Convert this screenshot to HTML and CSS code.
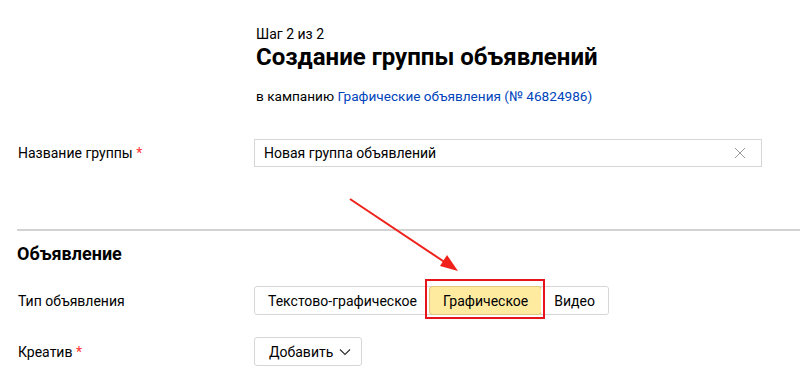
FILE: index.html
```html
<!DOCTYPE html>
<html lang="ru">
<head>
    <meta charset="UTF-8">
    <meta name="viewport" content="width=device-width, initial-scale=1.0">
    <title>Создание группы объявлений</title>
    <link rel="stylesheet" href="styles.css">
</head>
<body>
    <div class="page">
        <div class="head">
            <div class="step">Шаг 2 из 2</div>
            <h1>Создание группы объявлений</h1>
            <div class="campaign">в кампанию <a href="#">Графические объявления (№ 46824986)</a></div>
        </div>

        <div class="row row-name">
            <div class="label">Название группы <span class="req">*</span></div>
            <div class="input">
                <span class="input-text">Новая группа объявлений</span>
                <svg class="clear" width="12" height="12" viewBox="0 0 12 12">
                    <path d="M1 1 L11 11 M11 1 L1 11" stroke="#999" stroke-width="1" fill="none"/>
                </svg>
            </div>
        </div>

        <div class="section">
            <h2>Объявление</h2>

            <div class="row row-type">
                <div class="label">Тип объявления</div>
                <div class="control">
                    <div class="seg">
                        <button type="button">Текстово-графическое</button>
                        <button type="button" class="active">Графическое</button>
                        <button type="button">Видео</button>
                    </div>
                </div>
            </div>

            <div class="row row-creative">
                <div class="label">Креатив <span class="req">*</span></div>
                <div class="control">
                    <button type="button" class="add">Добавить
                        <svg width="12" height="8" viewBox="0 0 12 8">
                            <path d="M1 1.5 L6 6.5 L11 1.5" stroke="#333" stroke-width="1.2" fill="none"/>
                        </svg>
                    </button>
                </div>
            </div>
        </div>
    </div>

    <!-- annotation drawn over the screenshot -->
    <div class="mark"></div>
    <svg class="arrow" width="800" height="388" viewBox="0 0 800 388">
        <line x1="350" y1="199" x2="446" y2="263" stroke="#f0201a" stroke-width="2"/>
        <polygon points="458,271 440,266 447,255" fill="#f0201a"/>
    </svg>
</body>
</html>
```

FILE: styles.css
```css
/* General Reset */
* {
    margin: 0;
    padding: 0;
    box-sizing: border-box;
}

body {
    font-family: 'Roboto', 'Liberation Sans', sans-serif;
    font-size: 15px;
    color: #000;
    background: #fff;
    overflow: hidden;
}

.page {
    padding: 26px 0 0 17px;
}

.head {
    padding-left: 239px;
}

.step {
    font-size: 14px;
    line-height: 16px;
}

.head h1 {
    font-size: 24px;
    font-weight: 700;
    line-height: 28px;
    margin-top: 1px;
}

.campaign {
    font-size: 13.6px;
    line-height: 16px;
    margin-top: 17px;
}

.campaign a {
    color: #0044bb;
    text-decoration: none;
}

.row {
    display: grid;
    grid-template-columns: 237px 508px;
    align-items: center;
}

.label {
    font-size: 14px;
    padding-left: 1px;
}

.req {
    color: #f33;
}

.row-name {
    margin-top: 35px;
}

.input {
    height: 28px;
    border: 1px solid #d6d6d6;
    display: flex;
    align-items: center;
    justify-content: space-between;
    padding: 0 15px 0 9px;
    font-size: 14px;
}

.section {
    margin-top: 62px;
    border-top: 2px solid #d2d2d2;
}

.section h2 {
    font-size: 18px;
    font-weight: 700;
    line-height: 22px;
    margin-top: 12px;
}

.row-type {
    margin-top: 21px;
}

.seg {
    display: inline-flex;
    border: 1px solid #d6d6d6;
    border-radius: 3px;
}

.seg button {
    font-family: inherit;
    font-size: 14px;
    color: #000;
    background: #fff;
    border: none;
    height: 27px;
    padding: 0 13px;
    border-radius: 3px;
}

.seg button.active {
    background: #ffeba0;
    box-shadow: 0 0 0 1px #e0c97e;
}

.row-creative {
    margin-top: 22px;
}

.add {
    font-family: inherit;
    font-size: 14px;
    height: 29px;
    padding: 0 10px 0 14px;
    background: #fff;
    border: 1px solid #d6d6d6;
    border-radius: 3px;
    display: inline-flex;
    align-items: center;
    gap: 6px;
}

.mark {
    position: absolute;
    left: 425px;
    top: 279px;
    width: 120px;
    height: 40px;
    border: 2px solid #e8141c;
}

.arrow {
    position: absolute;
    left: 0;
    top: 0;
    pointer-events: none;
}
```
